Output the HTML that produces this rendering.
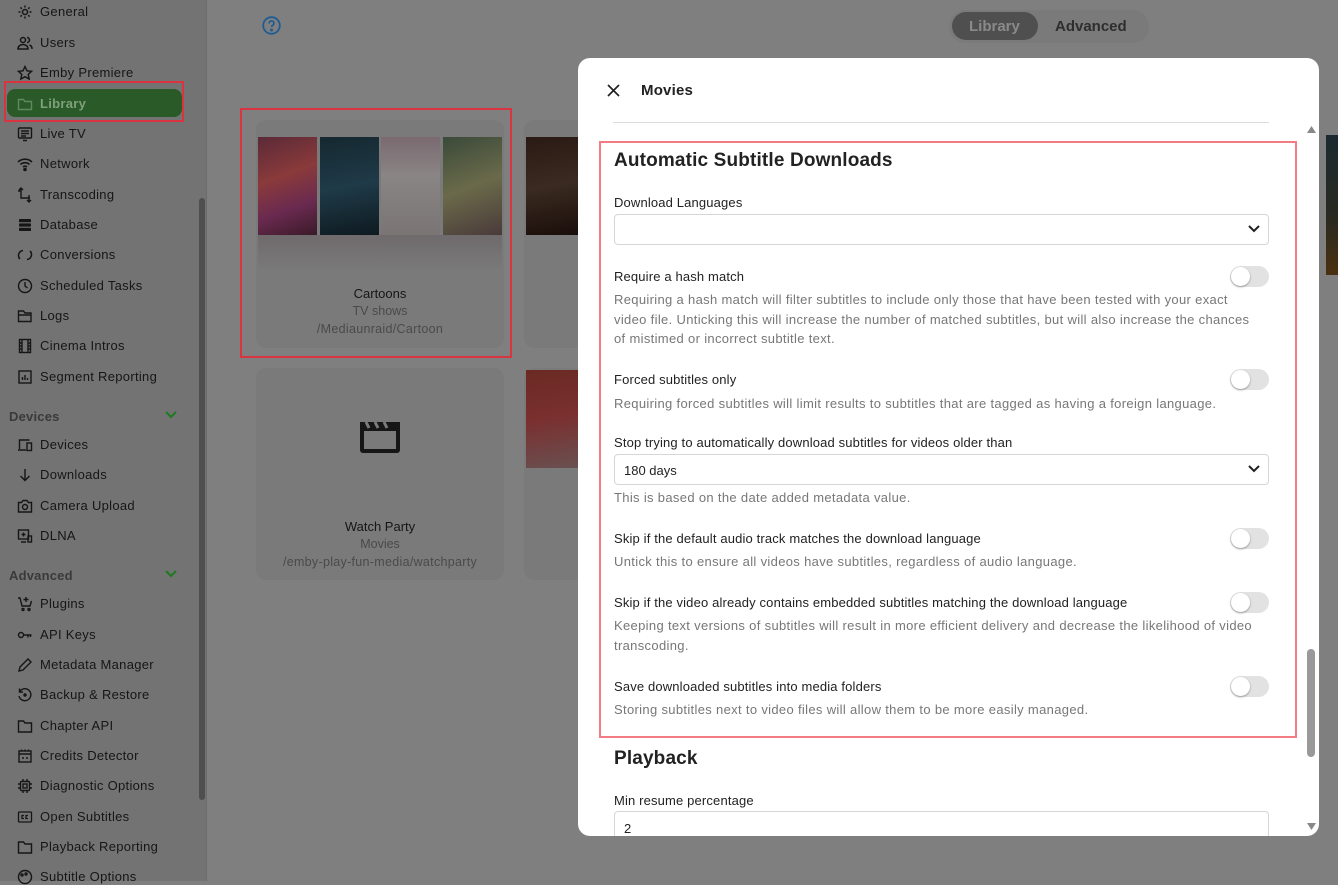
<!DOCTYPE html>
<html><head><meta charset="utf-8"><style>
*{box-sizing:border-box;margin:0;padding:0}
body{width:1338px;height:881px;overflow:hidden;background:#7f7f7f;font-family:"Liberation Sans",sans-serif;position:relative}
.a{position:absolute;white-space:nowrap}
.sb{position:absolute;left:0;top:0;width:207px;height:881px;background:#737373;border-right:1px solid #6c6c6c}
.si{position:absolute;left:40px;font-size:13px;color:#161616;line-height:16px;letter-spacing:0.3px}
.ic{position:absolute;left:17px;width:16px;height:16px}
.hd{position:absolute;left:9px;font-size:13px;font-weight:bold;color:#3a3a3a;letter-spacing:0.2px}
.chev{position:absolute;left:165px;width:12px;height:8px}
.card{position:absolute;background:#7a7a7a;border-radius:10px}
.m{position:absolute;left:578px;top:58px;width:741px;height:778px;background:#fff;border-radius:12px;overflow:hidden}
.m .c{position:absolute;left:0;top:1px;width:741px;height:778px}
.lbl{position:absolute;left:36px;font-size:13px;color:#222;white-space:nowrap;letter-spacing:0.15px}
.desc{position:absolute;left:36px;font-size:13px;color:#777;line-height:19.5px;white-space:nowrap;letter-spacing:0.33px}
.tg{position:absolute;left:652px;width:39px;height:21px;border-radius:11px;background:#e2e2e2}
.tg:after{content:"";position:absolute;left:1px;top:1px;width:19px;height:19px;border-radius:50%;background:#fff;box-shadow:0 1px 2px rgba(0,0,0,.35)}
.sel{position:absolute;left:36px;width:655px;height:31px;border:1px solid #d6d6d6;border-radius:4px;font-size:13px;color:#222;padding:8px 9px}
.sel svg{position:absolute;right:8px;top:10px}
</style></head><body>
<div class="sb">
<div class="a" style="left:7px;top:89px;width:175px;height:28px;background:#2a5a28;border-radius:8px"></div>
<div class="a" style="left:4px;top:81px;width:180px;height:41px;border:2px solid #d9343f"></div>
<svg class="ic" style="top:4px" viewBox="0 0 16 16" fill="none" stroke="#161616" stroke-width="1.5"><circle cx="8" cy="8" r="2.5"/><path d="M8 1.5v2M8 12.5v2M1.5 8h2M12.5 8h2M3.4 3.4l1.4 1.4M11.2 11.2l1.4 1.4M3.4 12.6l1.4-1.4M11.2 4.8l1.4-1.4"/></svg>
<div class="si" style="top:4px">General</div>
<svg class="ic" style="top:35px" viewBox="0 0 16 16" fill="none" stroke="#161616" stroke-width="1.5"><circle cx="6" cy="5" r="2.5"/><path d="M1 14c0-3 2.5-4.5 5-4.5s5 1.5 5 4.5zM10 2.5a2.5 2.5 0 010 5M12.5 10c1.5.5 2.5 2 2.5 4"/></svg>
<div class="si" style="top:35px">Users</div>
<svg class="ic" style="top:65px" viewBox="0 0 16 16" fill="none" stroke="#161616" stroke-width="1.4"><path d="M8 1.5l2 4.3 4.6.5-3.4 3.1 1 4.6L8 11.7 3.8 14l1-4.6L1.4 6.3l4.6-.5z"/></svg>
<div class="si" style="top:65px">Emby Premiere</div>
<svg class="ic" style="top:96px" viewBox="0 0 16 16" fill="none" stroke="#5f8a5c" stroke-width="1.4"><path d="M1.5 3.5h5l1.5 2h6.5v8h-13z"/></svg>
<div class="si" style="top:96px;color:#7fa07c;font-weight:bold">Library</div>
<svg class="ic" style="top:126px" viewBox="0 0 16 16" fill="none" stroke="#161616" stroke-width="1.4"><rect x="1.5" y="2" width="13" height="10" rx="1"/><path d="M4 5h8M4 7.5h8M4 10h5M6 14.5h4"/></svg>
<div class="si" style="top:126px">Live TV</div>
<svg class="ic" style="top:156px" viewBox="0 0 16 16" fill="none" stroke="#161616" stroke-width="1.6"><path d="M1 6a10 10 0 0114 0M3.5 8.5a6.5 6.5 0 019 0M6 11a3 3 0 014 0"/><circle cx="8" cy="13.5" r="1" fill="#161616"/></svg>
<div class="si" style="top:156px">Network</div>
<svg class="ic" style="top:187px" viewBox="0 0 16 16" fill="none" stroke="#161616" stroke-width="1.4"><path d="M4 1v10h9M1 4h3M12 8v7M10 13l2 2 2-2M2 3l2-2 2 2"/></svg>
<div class="si" style="top:187px">Transcoding</div>
<svg class="ic" style="top:217px" viewBox="0 0 16 16" fill="#161616"><rect x="2" y="2" width="12" height="3.2" rx=".8"/><rect x="2" y="6.4" width="12" height="3.2" rx=".8"/><rect x="2" y="10.8" width="12" height="3.2" rx=".8"/></svg>
<div class="si" style="top:217px">Database</div>
<svg class="ic" style="top:247px" viewBox="0 0 16 16" fill="none" stroke="#161616" stroke-width="1.5"><path d="M6 3.5A5 5 0 003 12M10 12.5A5 5 0 0013 4M3 12l-1.5-1.5M13 4l1.5 1.5"/></svg>
<div class="si" style="top:247px">Conversions</div>
<svg class="ic" style="top:278px" viewBox="0 0 16 16" fill="none" stroke="#161616" stroke-width="1.4"><circle cx="8" cy="8" r="6.5"/><path d="M8 4v4l2.5 2"/></svg>
<div class="si" style="top:278px">Scheduled Tasks</div>
<svg class="ic" style="top:308px" viewBox="0 0 16 16" fill="none" stroke="#161616" stroke-width="1.4"><path d="M1.5 3h5l1.5 2h6v8.5h-12.5zM1.5 7h13"/></svg>
<div class="si" style="top:308px">Logs</div>
<svg class="ic" style="top:338px" viewBox="0 0 16 16" fill="none" stroke="#161616" stroke-width="1.4"><rect x="2.5" y="1.5" width="11" height="13"/><path d="M5 1.5v13M11 1.5v13M2.5 5h2.5M2.5 8h2.5M2.5 11h2.5M11 5h2.5M11 8h2.5M11 11h2.5"/></svg>
<div class="si" style="top:338px">Cinema Intros</div>
<svg class="ic" style="top:369px" viewBox="0 0 16 16" fill="none" stroke="#161616" stroke-width="1.4"><rect x="2" y="2" width="12" height="12"/><path d="M5.5 11V8M8 11V6M10.5 11V9"/></svg>
<div class="si" style="top:369px">Segment Reporting</div>
<div class="hd" style="top:409px">Devices</div>
<svg class="chev" style="top:411px" viewBox="0 0 12 8" fill="none" stroke="#1d7a1d" stroke-width="2"><path d="M1 1l5 5 5-5"/></svg>
<svg class="ic" style="top:437px" viewBox="0 0 16 16" fill="none" stroke="#161616" stroke-width="1.4"><path d="M2.5 12V3h10M1 13h8"/><rect x="10" y="6" width="4.5" height="7.5"/></svg>
<div class="si" style="top:437px">Devices</div>
<svg class="ic" style="top:467px" viewBox="0 0 16 16" fill="none" stroke="#161616" stroke-width="1.4"><path d="M8 2v11M3.5 9L8 13.5 12.5 9"/></svg>
<div class="si" style="top:467px">Downloads</div>
<svg class="ic" style="top:498px" viewBox="0 0 16 16" fill="none" stroke="#161616" stroke-width="1.4"><path d="M1.5 4.5h3l1.5-2h4l1.5 2h3v9.5h-13z"/><circle cx="8" cy="9" r="2.5"/></svg>
<div class="si" style="top:498px">Camera Upload</div>
<svg class="ic" style="top:528px" viewBox="0 0 16 16" fill="none" stroke="#161616" stroke-width="1.4"><rect x="1.5" y="2" width="10" height="9"/><path d="M4 14h5M6.5 4.5v4M4.5 6.5h4"/><rect x="11" y="8" width="3.5" height="6"/></svg>
<div class="si" style="top:528px">DLNA</div>
<div class="hd" style="top:568px">Advanced</div>
<svg class="chev" style="top:570px" viewBox="0 0 12 8" fill="none" stroke="#1d7a1d" stroke-width="2"><path d="M1 1l5 5 5-5"/></svg>
<svg class="ic" style="top:596px" viewBox="0 0 16 16" fill="none" stroke="#161616" stroke-width="1.4"><path d="M1 2h2l2 8h8l1.5-5M9 1v5M6.5 3.5h5"/><circle cx="6" cy="13.5" r="1"/><circle cx="12" cy="13.5" r="1"/></svg>
<div class="si" style="top:596px">Plugins</div>
<svg class="ic" style="top:627px" viewBox="0 0 16 16" fill="none" stroke="#161616" stroke-width="1.4"><circle cx="4" cy="8" r="2.5"/><path d="M6.5 8h8M11 8v2.5M13.5 8v2"/></svg>
<div class="si" style="top:627px">API Keys</div>
<svg class="ic" style="top:657px" viewBox="0 0 16 16" fill="none" stroke="#161616" stroke-width="1.4"><path d="M2 14l1-4 8-8 3 3-8 8z"/></svg>
<div class="si" style="top:657px">Metadata Manager</div>
<svg class="ic" style="top:687px" viewBox="0 0 16 16" fill="none" stroke="#161616" stroke-width="1.4"><path d="M2.5 5A6 6 0 112 9M2.5 1.5V5H6"/><circle cx="8" cy="8" r="1" fill="#161616"/></svg>
<div class="si" style="top:687px">Backup &amp; Restore</div>
<svg class="ic" style="top:718px" viewBox="0 0 16 16" fill="none" stroke="#161616" stroke-width="1.4"><path d="M1.5 3h5l1.5 2h6.5v9h-13z"/></svg>
<div class="si" style="top:718px">Chapter API</div>
<svg class="ic" style="top:748px" viewBox="0 0 16 16" fill="none" stroke="#161616" stroke-width="1.4"><rect x="2" y="3" width="12" height="11"/><path d="M2 6h12M4.5 1.5V3M8 1.5V3M11.5 1.5V3M5 10h2M9 10h2"/></svg>
<div class="si" style="top:748px">Credits Detector</div>
<svg class="ic" style="top:778px" viewBox="0 0 16 16" fill="none" stroke="#161616" stroke-width="1.4"><rect x="3.5" y="3.5" width="9" height="9" rx="1"/><rect x="6" y="6" width="4" height="4"/><path d="M6 1v2.5M10 1v2.5M6 12.5V15M10 12.5V15M1 6h2.5M1 10h2.5M12.5 6H15M12.5 10H15"/></svg>
<div class="si" style="top:778px">Diagnostic Options</div>
<svg class="ic" style="top:809px" viewBox="0 0 16 16" fill="none" stroke="#161616" stroke-width="1.3"><rect x="1.5" y="3" width="13" height="10" rx="1"/><path d="M7 6.5H5v3h2M11 6.5H9v3h2"/></svg>
<div class="si" style="top:809px">Open Subtitles</div>
<svg class="ic" style="top:839px" viewBox="0 0 16 16" fill="none" stroke="#161616" stroke-width="1.4"><path d="M1.5 3h5l1.5 2h6.5v9h-13z"/></svg>
<div class="si" style="top:839px">Playback Reporting</div>
<svg class="ic" style="top:869px" viewBox="0 0 16 16" fill="none" stroke="#161616" stroke-width="1.4"><circle cx="8" cy="8" r="6.5"/><circle cx="5" cy="6" r="1"/><circle cx="9" cy="5" r="1"/></svg>
<div class="si" style="top:869px">Subtitle Options</div>
<div class="a" style="left:199px;top:198px;width:6px;height:602px;background:#4f4f4f;border-radius:3px"></div>
</div>

<svg class="a" style="left:262px;top:16px" width="19" height="19" viewBox="0 0 19 19" fill="none" stroke="#1f5c93" stroke-width="1.8"><circle cx="9.5" cy="9.5" r="8.3"/><path d="M7 7.5a2.5 2.5 0 115 0c0 1.5-2.5 2-2.5 3.5"/><circle cx="9.5" cy="14" r=".6" fill="#1f5c93"/></svg>

<div class="a" style="left:949px;top:10px;width:200px;height:33px;border-radius:17px;background:#7a7a7a"></div>
<div class="a" style="left:952px;top:12px;width:86px;height:28px;border-radius:14px;background:#4f4f4f"></div>
<div class="a" style="left:969px;top:18px;font-size:15px;font-weight:bold;color:#8a8a8a">Library</div>
<div class="a" style="left:1055px;top:18px;font-size:15px;font-weight:bold;color:#2e2e2e">Advanced</div>

<div class="card" style="left:256px;top:120px;width:248px;height:228px"></div>
<div class="a" style="left:258px;top:137px;width:59px;height:98px;background:linear-gradient(160deg,#5a2a38,#8a3a3a 40%,#6a2a50 70%,#3a1a28)"></div>
<div class="a" style="left:320px;top:137px;width:59px;height:98px;background:linear-gradient(170deg,#152830,#1f3a48 50%,#0e1a20)"></div>
<div class="a" style="left:381px;top:137px;width:59px;height:98px;background:linear-gradient(180deg,#7a6a70,#8a8585 40%,#7a7474)"></div>
<div class="a" style="left:443px;top:137px;width:59px;height:98px;background:linear-gradient(160deg,#3a4a3a,#6a6a4a 50%,#4a3a3a)"></div>
<div class="a" style="left:258px;top:235px;width:244px;height:36px;background:linear-gradient(180deg,#6f6a6c,#7a7a7a)"></div>
<div class="a" style="left:256px;top:286px;width:248px;text-align:center;font-size:13px;color:#161616">Cartoons</div>
<div class="a" style="left:256px;top:304px;width:248px;text-align:center;font-size:12.5px;color:#4a4a4a">TV shows</div>
<div class="a" style="left:256px;top:322px;width:248px;text-align:center;font-size:12.5px;color:#4a4a4a;letter-spacing:0.3px">/Mediaunraid/Cartoon</div>
<div class="a" style="left:240px;top:108px;width:272px;height:250px;border:2px solid #d9343f"></div>

<div class="card" style="left:524px;top:120px;width:60px;height:228px"></div>
<div class="a" style="left:526px;top:137px;width:52px;height:98px;background:linear-gradient(170deg,#2a1a14,#3a2a20 50%,#1a0e0a)"></div>
<div class="card" style="left:256px;top:368px;width:248px;height:212px"></div>
<svg class="a" style="left:358px;top:418px" width="44" height="36" viewBox="0 0 44 36"><path d="M2 4h40v28a3 3 0 01-3 3H5a3 3 0 01-3-3z" fill="#161616"/><rect x="6" y="13" width="32" height="18" fill="#7a7a7a"/><path d="M8 4l3 6M17 4l3 6M26 4l3 6" stroke="#7a7a7a" stroke-width="3"/></svg>
<div class="a" style="left:256px;top:519px;width:248px;text-align:center;font-size:13px;color:#161616">Watch Party</div>
<div class="a" style="left:256px;top:537px;width:248px;text-align:center;font-size:12.5px;color:#4a4a4a">Movies</div>
<div class="a" style="left:256px;top:555px;width:248px;text-align:center;font-size:12.5px;color:#4a4a4a;letter-spacing:0.3px">/emby-play-fun-media/watchparty</div>
<div class="card" style="left:524px;top:368px;width:60px;height:212px"></div>
<div class="a" style="left:526px;top:370px;width:52px;height:98px;background:linear-gradient(170deg,#6a2a22,#7a3030 50%,#6a5050)"></div>
<div class="a" style="left:1326px;top:135px;width:12px;height:140px;background:linear-gradient(180deg,#1a2a30,#2a2a20 60%,#4a3010)"></div>

<div class="m"><div class="c">
<svg class="a" style="left:29px;top:25px" width="13" height="13" viewBox="0 0 13 13" stroke="#222" stroke-width="1.7"><path d="M1 1l11 11M12 1L1 12"/></svg>
<div class="a" style="left:63px;top:23px;font-size:15px;font-weight:bold;color:#222;letter-spacing:0.2px">Movies</div>
<div class="a" style="left:35px;top:63px;width:656px;height:1px;background:#ddd"></div>
<div class="a" style="left:21px;top:82px;width:698px;height:597px;border:2px solid #f37b84"></div>
<div class="a" style="left:36px;top:91px;font-size:19px;font-weight:bold;color:#222;letter-spacing:0.15px">Automatic Subtitle Downloads</div>
<div class="lbl" style="top:136px">Download Languages</div>
<div class="sel" style="top:155px"><svg width="12" height="8" viewBox="0 0 12 8" fill="none" stroke="#222" stroke-width="2"><path d="M1 1l5 5 5-5"/></svg></div>
<div class="lbl" style="top:210px">Require a hash match</div>
<div class="tg" style="top:207px"></div>
<div class="desc" style="top:231px">Requiring a hash match will filter subtitles to include only those that have been tested with your exact<br>video file. Unticking this will increase the number of matched subtitles, but will also increase the chances<br>of mistimed or incorrect subtitle text.</div>
<div class="lbl" style="top:313px">Forced subtitles only</div>
<div class="tg" style="top:310px"></div>
<div class="desc" style="top:335px">Requiring forced subtitles will limit results to subtitles that are tagged as having a foreign language.</div>
<div class="lbl" style="top:376px">Stop trying to automatically download subtitles for videos older than</div>
<div class="sel" style="top:395px">180 days<svg width="12" height="8" viewBox="0 0 12 8" fill="none" stroke="#222" stroke-width="2"><path d="M1 1l5 5 5-5"/></svg></div>
<div class="desc" style="top:429px">This is based on the date added metadata value.</div>
<div class="lbl" style="top:472px">Skip if the default audio track matches the download language</div>
<div class="tg" style="top:469px"></div>
<div class="desc" style="top:493px">Untick this to ensure all videos have subtitles, regardless of audio language.</div>
<div class="lbl" style="top:536px">Skip if the video already contains embedded subtitles matching the download language</div>
<div class="tg" style="top:533px"></div>
<div class="desc" style="top:557px">Keeping text versions of subtitles will result in more efficient delivery and decrease the likelihood of video<br>transcoding.</div>
<div class="lbl" style="top:620px">Save downloaded subtitles into media folders</div>
<div class="tg" style="top:617px"></div>
<div class="desc" style="top:641px">Storing subtitles next to video files will allow them to be more easily managed.</div>
<div class="a" style="left:36px;top:689px;font-size:19px;font-weight:bold;color:#222;letter-spacing:0.15px">Playback</div>
<div class="lbl" style="top:734px">Min resume percentage</div>
<div class="a" style="left:36px;top:752px;width:655px;height:40px;border:1px solid #d6d6d6;border-radius:4px;font-size:13px;color:#222;padding:9px 9px">2</div>
</div>
<svg class="a" style="left:729px;top:68px" width="9" height="7" viewBox="0 0 9 7"><path d="M4.5 0L9 7H0z" fill="#888"/></svg>
<div class="a" style="left:729px;top:591px;width:8px;height:108px;background:#999;border-radius:4px"></div>
<svg class="a" style="left:729px;top:765px" width="9" height="7" viewBox="0 0 9 7"><path d="M0 0h9L4.5 7z" fill="#888"/></svg>
</div>
</body></html>
